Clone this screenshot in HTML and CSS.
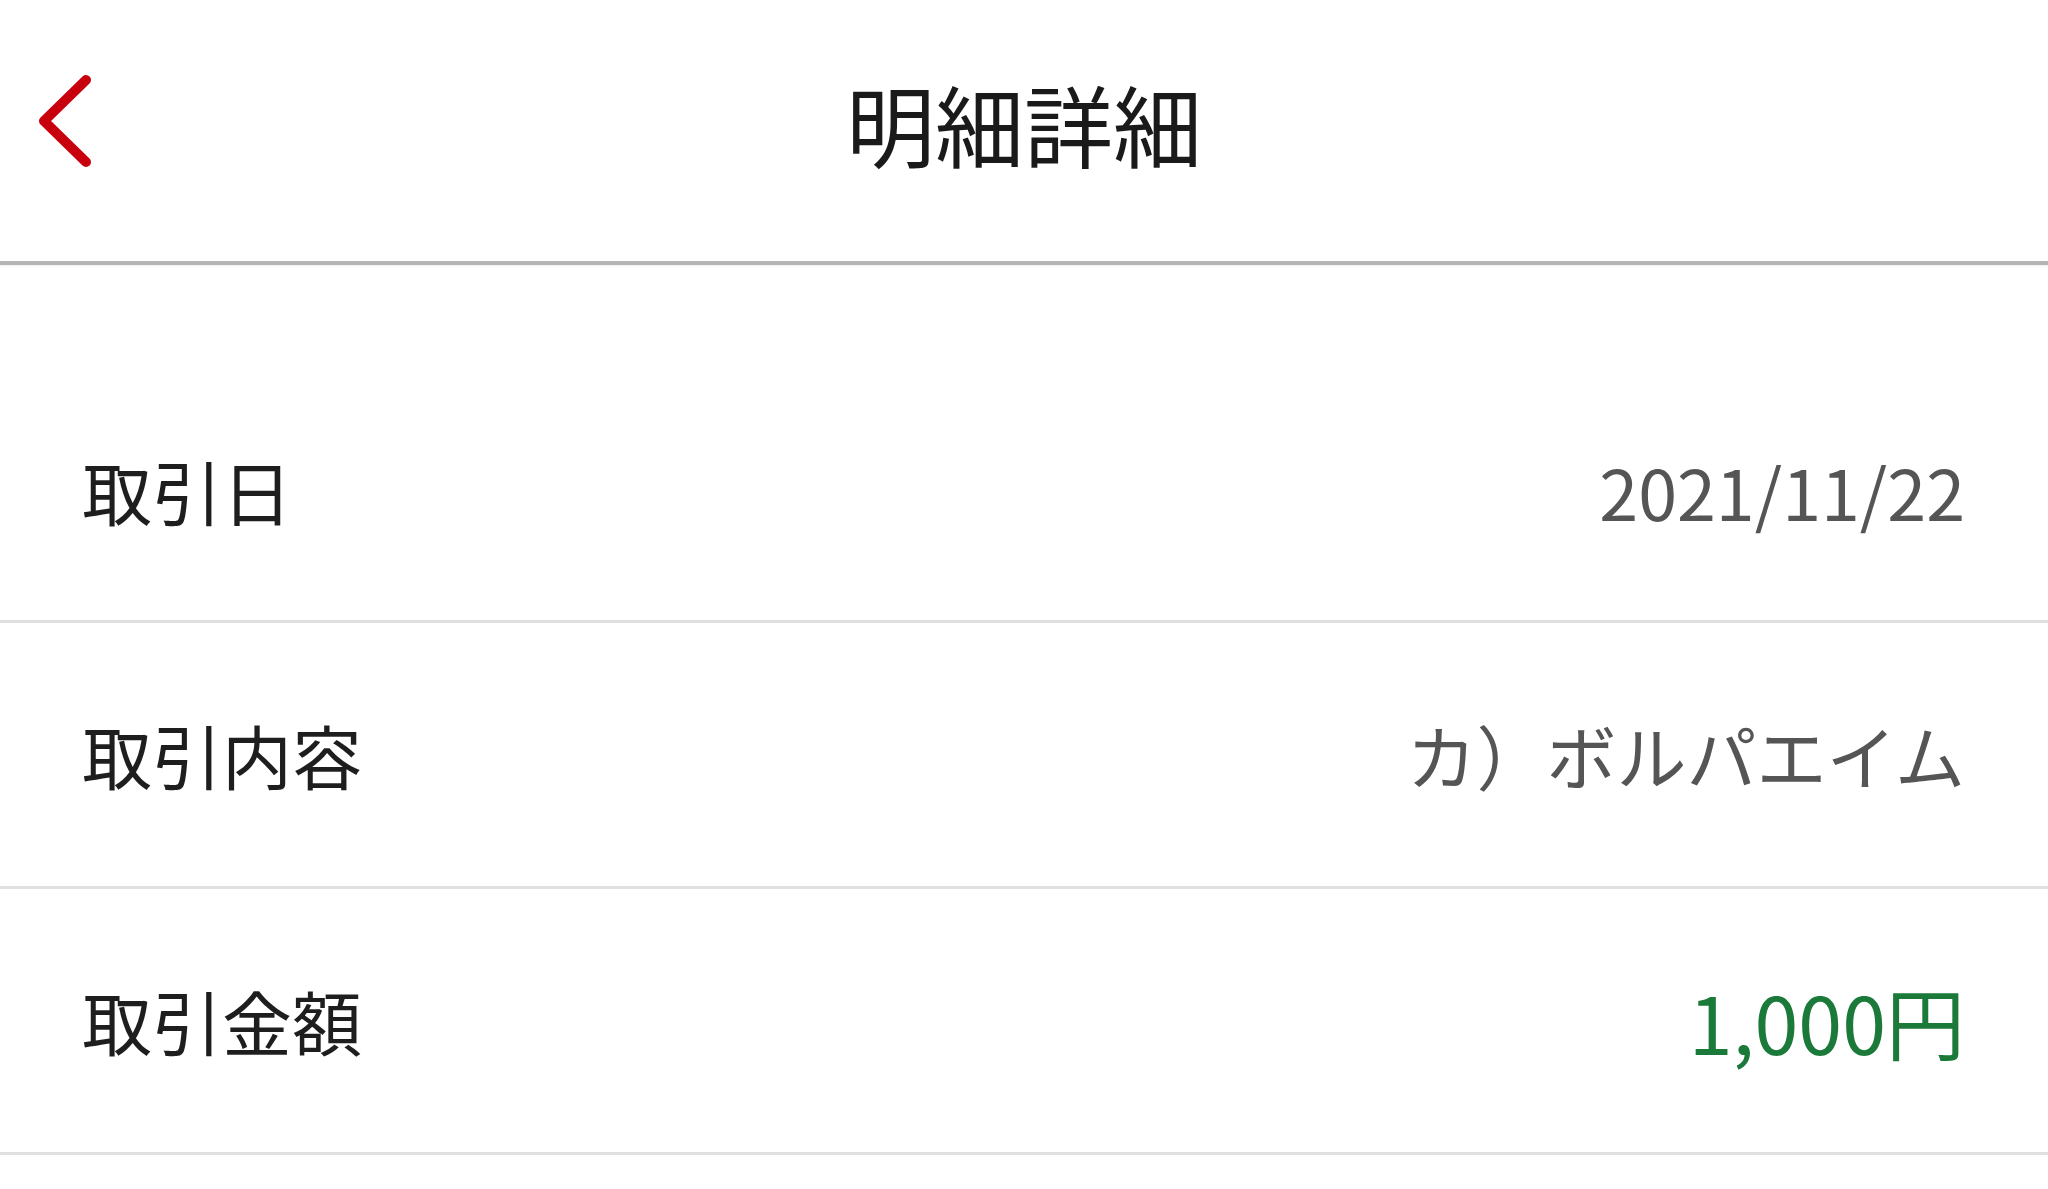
FILE: index.html
```html
<!DOCTYPE html>
<html lang="ja">
<head>
    <meta charset="UTF-8">
    <meta name="viewport" content="width=device-width, initial-scale=1.0">
    <title>明細詳細</title>
    <link rel="stylesheet" href="styles.css">
</head>
<body>
    <header class="app-header">
        <a href="#" class="back-btn" aria-label="戻る">
            <svg viewBox="0 0 64 96" width="64" height="96">
                <path d="M56 7 L14 48 L56 89" fill="none" stroke="#c8000e" stroke-width="10" stroke-linecap="round" stroke-linejoin="round"/>
            </svg>
        </a>
        <h1 class="title">明細詳細</h1>
        <div></div>
    </header>

    <main class="detail">
        <div class="row">
            <span class="label">取引日</span>
            <span class="value">2021/11/22</span>
        </div>
        <div class="row">
            <span class="label">取引内容</span>
            <span class="value">カ）ボルパエイム</span>
        </div>
        <div class="row">
            <span class="label">取引金額</span>
            <span class="value amount">1,000円</span>
        </div>
    </main>
</body>
</html>
```

FILE: styles.css
```css
html, body {
    margin: 0;
    background: #fff;
}
body {
    font-family: "Noto Sans CJK JP", "Noto Sans", sans-serif;
    color: #222;
}
.app-header {
    display: grid;
    grid-template-columns: 1fr auto 1fr;
    align-items: center;
    height: 261px;
    border-bottom: 4px solid #b4b4b4;
    box-shadow: 0 1px 2px rgba(0,0,0,0.08);
}
.back-btn {
    display: flex;
    align-items: center;
    padding: 0 0 20px 30px;
    height: calc(100% - 20px);
}
.title {
    margin: 0;
    padding-bottom: 16px;
    font-size: 89px;
    font-weight: 400;
    color: #1a1a1a;
    line-height: 1;
}
.detail {
    padding-top: 96px;
}
.row {
    display: flex;
    justify-content: space-between;
    align-items: center;
    box-sizing: border-box;
    height: 266px;
    padding: 0 83px 0 82px;
    border-bottom: 3px solid #e0e0e0;
}
.detail .row:first-child {
    height: 262px;
}
.label {
    font-size: 70px;
    color: #1e1e1e;
    line-height: 1;
}
.value {
    font-size: 70px;
    color: #555;
    line-height: 1;
}
.amount {
    font-size: 79px;
    color: #1b7a3a;
}
```
